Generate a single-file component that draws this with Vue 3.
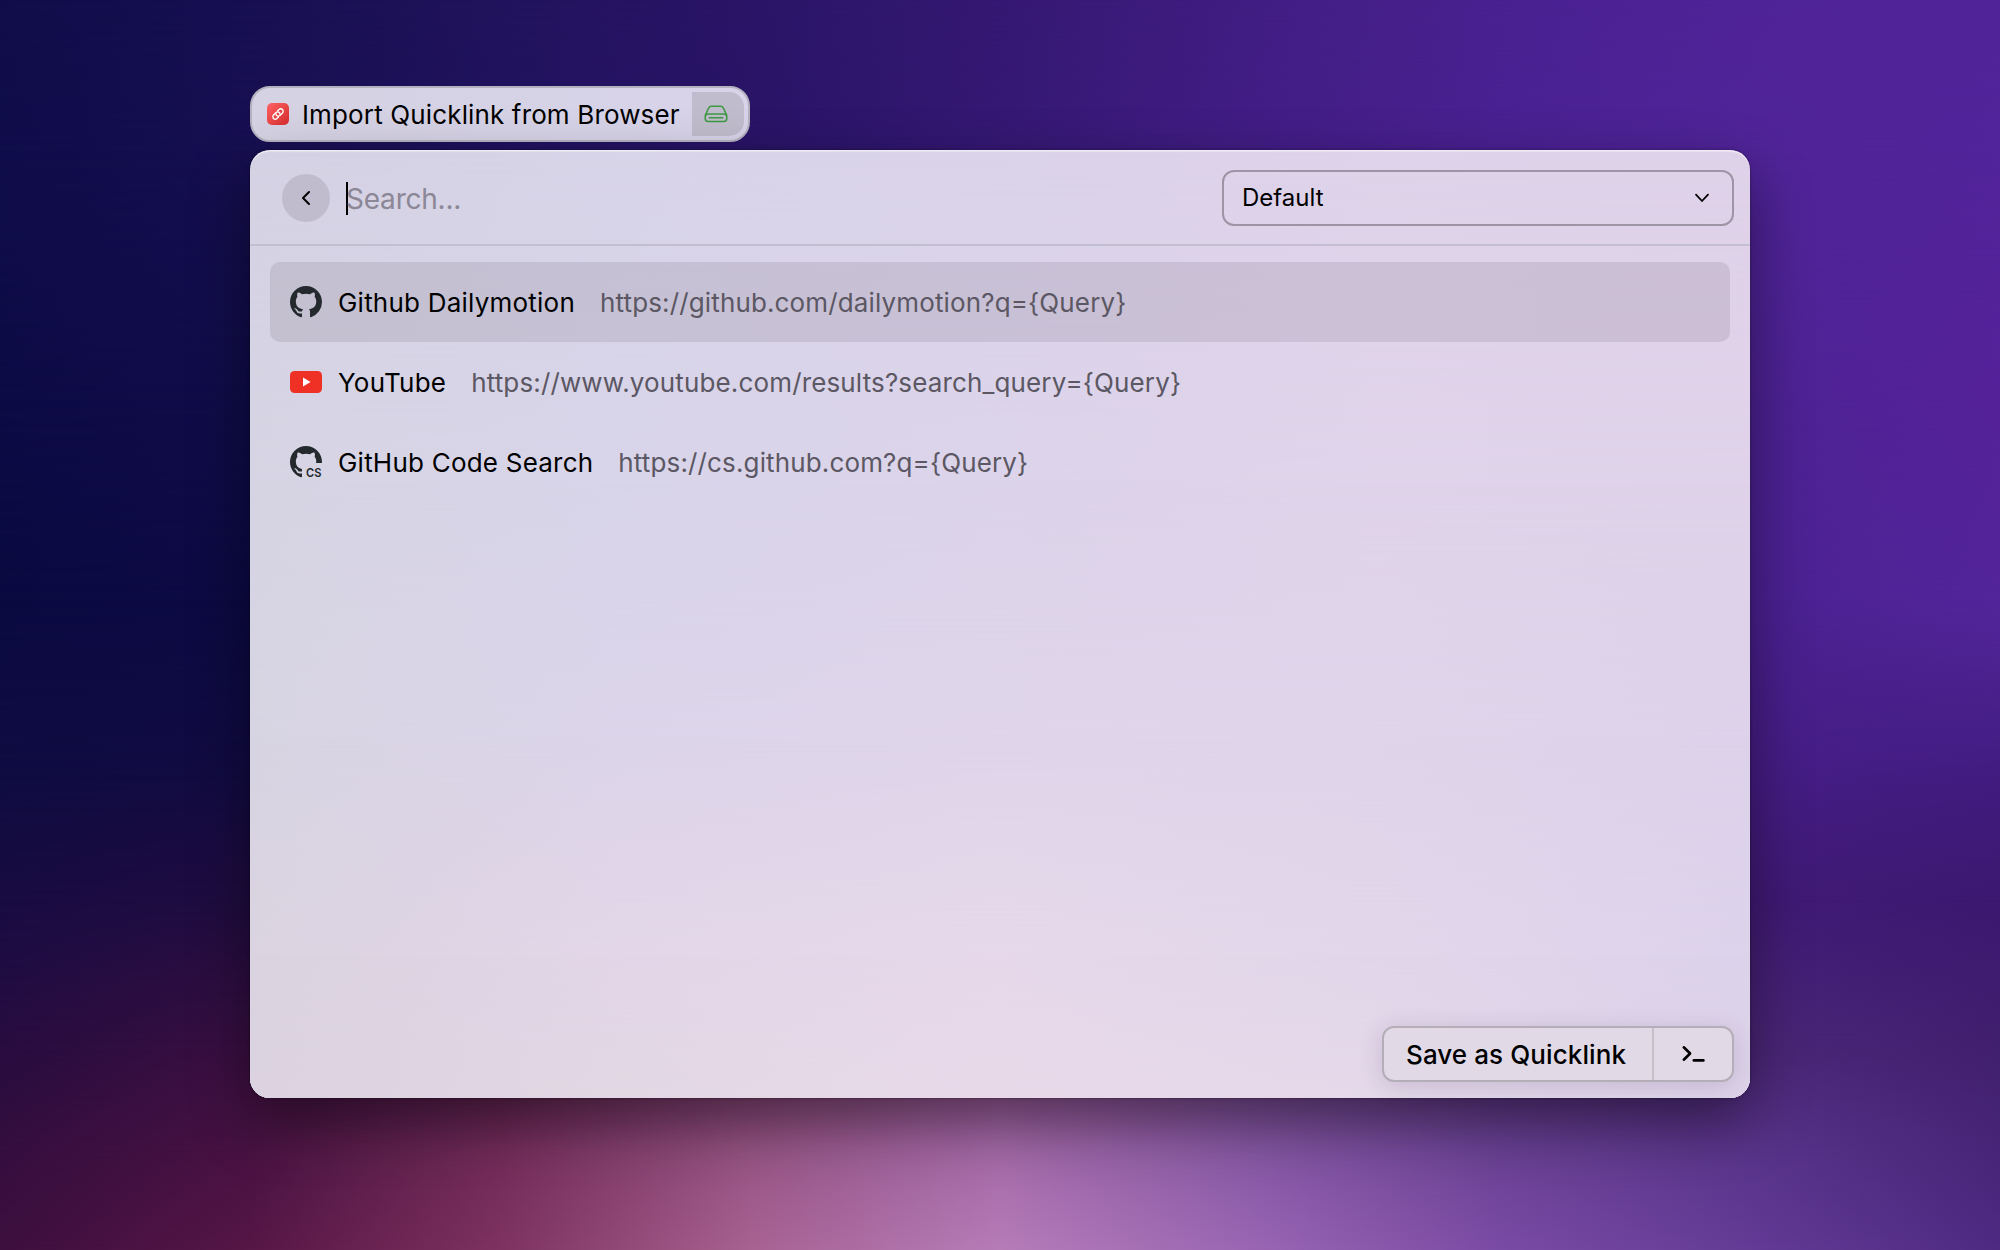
<script setup>
const wallpaper = [
  { y: 0, colors: ['#100e4a', '#170f51', '#21135d', '#2a1567', '#351873', '#401e82', '#4a2191', '#4f2397', '#522499'] },
  { y: 12, colors: ['#0f0d4a', '#170f50', '#20125e', '#291466', '#351874', '#411d84', '#4a2192', '#502498', '#52249a'] },
  { y: 32, colors: ['#0c0b45', '#100c49', '#1c1155', '#271463', '#321670', '#3c1a7c', '#471f8c', '#4d2294', '#552299'] },
  { y: 48, colors: ['#0a0a41', '#0d0a44', '#1a0f50', '#25135c', '#2f1569', '#391975', '#431d85', '#4b2192', '#53259a'] },
  { y: 62, colors: ['#0f0c42', '#120b42', '#220f4a', '#301450', '#3c1860', '#3f1a6b', '#3f1a78', '#461d85', '#421c80'] },
  { y: 72, colors: ['#180c42', '#200c40', '#341147', '#4c1d57', '#55276a', '#502572', '#421c73', '#411a76', '#3c186f'] },
  { y: 84, colors: ['#280c40', '#3a0f41', '#561c4d', '#7a3a6e', '#8e4e8d', '#73428c', '#55307d', '#4b2778', '#41206f'] },
  { y: 92, colors: ['#340e3e', '#481242', '#722c58', '#965484', '#a46aa8', '#8658a4', '#6a4194', '#59348a', '#472577'] },
  { y: 100, colors: ['#3d0f3e', '#561646', '#7e3260', '#a76292', '#b57cb8', '#9a66b3', '#7a4ba4', '#633b95', '#4f2a82'] },
]

const glass = [
  { y: 0, colors: ['#d5d2e4', '#d8d4e8', '#dad3e9', '#dfd3ea', '#dfd2e9'] },
  { y: 35, colors: ['#d6d4e3', '#d8d4e9', '#dcd4ea', '#e0d3ea', '#dfd2e9'] },
  { y: 62, colors: ['#d7d4e2', '#dcd5ea', '#dfd5ea', '#e0d4ea', '#ddd2ea'] },
  { y: 85, colors: ['#dad3e0', '#e3d6e8', '#e6d8ea', '#e2d6ea', '#dcd3eb'] },
  { y: 100, colors: ['#dbd2e0', '#e2d7e4', '#e8d9e9', '#e4d8e9', '#dcd2e8'] },
]

function bandStyle(bands, i) {
  const band = bands[i]
  const style = { background: `linear-gradient(to right, ${band.colors.join(', ')})` }
  if (i > 0) {
    style.maskImage = `linear-gradient(to bottom, transparent ${bands[i - 1].y}%, #000 ${band.y}%)`
  }
  return style
}

const links = [
  { icon: 'github', title: 'Github Dailymotion', url: 'https://github.com/dailymotion?q={Query}' },
  { icon: 'youtube', title: 'YouTube', url: 'https://www.youtube.com/results?search_query={Query}' },
  { icon: 'code-search', title: 'GitHub Code Search', url: 'https://cs.github.com?q={Query}' },
]

const mark =
  'M8 0C3.58 0 0 3.58 0 8c0 3.54 2.29 6.53 5.47 7.59.4.07.55-.17.55-.38 0-.19-.01-.82-.01-1.49-2.01.37-2.53-.49-2.69-.94-.09-.23-.48-.94-.82-1.13-.28-.15-.68-.52-.01-.53.63-.01 1.08.58 1.23.82.72 1.21 1.87.87 2.33.66.07-.52.28-.87.51-1.07-1.78-.2-3.64-.89-3.64-3.95 0-.87.31-1.59.82-2.15-.08-.2-.36-1.02.08-2.12 0 0 .67-.21 2.2.82.64-.18 1.32-.27 2-.27s1.36.09 2 .27c1.53-1.04 2.2-.82 2.2-.82.44 1.1.16 1.92.08 2.12.51.56.82 1.27.82 2.15 0 3.07-1.87 3.75-3.65 3.95.29.25.54.73.54 1.48 0 1.07-.01 1.93-.01 2.2 0 .21.15.46.55.38A8.01 8.01 0 0 0 16 8c0-4.42-3.58-8-8-8z'
</script>

<template>
  <main class="desktop">
    <div class="bands">
      <i v-for="(b, i) in wallpaper" :key="i" class="band" :style="bandStyle(wallpaper, i)"></i>
    </div>

    <div class="pill">
      <svg class="app-icon" width="22" height="22" viewBox="0 0 22 22">
        <defs>
          <linearGradient id="red" x1="0" y1="0" x2="1" y2="1">
            <stop offset="0" stop-color="#ff6265" />
            <stop offset="1" stop-color="#d52b2c" />
          </linearGradient>
        </defs>
        <rect width="22" height="22" rx="5" fill="url(#red)" />
        <g transform="translate(11 11) rotate(-45)" fill="none" stroke="#fff" stroke-width="1.35" stroke-linecap="round">
          <path d="M-1.7 2.4H-3.9A2.4 2.4 0 0 1 -3.9 -2.4H-.3A2.4 2.4 0 0 1 1.2 1.7" />
          <path d="M1.7 -2.4H3.9A2.4 2.4 0 0 1 3.9 2.4H.3A2.4 2.4 0 0 1 -1.2 -1.7" />
        </g>
      </svg>
      <span class="pill-title">Import Quicklink from Browser</span>
      <span class="pill-badge">
        <svg width="24" height="18" viewBox="0 0 24 18" fill="none" stroke="#3c9a41" stroke-width="1.5" stroke-linecap="round" stroke-linejoin="round">
          <path d="M1.3 10.2 4.6 3.1Q5.4 1.2 7.4 1.2H16.6Q18.6 1.2 19.4 3.1L22.7 10.2" />
          <rect x="1.2" y="9" width="21.6" height="7.4" rx="3" />
          <path d="M5.2 12.7H18.8" />
        </svg>
      </span>
    </div>

    <section class="window">
      <div class="bands">
        <i v-for="(b, i) in glass" :key="i" class="band" :style="bandStyle(glass, i)"></i>
      </div>

      <header class="header">
        <button class="back" aria-label="Back">
          <svg width="10" height="16" viewBox="0 0 10 16" fill="none" stroke="#000" stroke-width="2" stroke-linecap="round" stroke-linejoin="round">
            <path d="M8 2 2 8l6 6" />
          </svg>
        </button>
        <div class="search"><span class="caret"></span><span class="placeholder">Search...</span></div>
        <div class="select">
          <span>Default</span>
          <svg width="16" height="10" viewBox="0 0 16 10" fill="none" stroke="#000" stroke-width="1.8" stroke-linecap="round" stroke-linejoin="round">
            <path d="M2 1.7 8 8l6-6.3" />
          </svg>
        </div>
      </header>

      <ul class="list">
        <li v-for="(l, i) in links" :key="l.title" class="row" :class="{ selected: i === 0 }">
          <svg v-if="l.icon === 'github'" width="32" height="32" viewBox="0 0 16 16"><path :d="mark" fill="#24292e" /></svg>
          <svg v-else-if="l.icon === 'youtube'" width="32" height="32" viewBox="0 0 32 32">
            <rect y="5" width="32" height="22" rx="4.5" fill="#ee3124" />
            <path d="M13 11.6v8.8l7.6-4.4z" fill="#fff" />
          </svg>
          <svg v-else class="code-search" width="32" height="32" viewBox="0 0 32 32">
            <defs><clipPath id="corner"><path d="M0 0H32V17H19L12 20V32H0z" /></clipPath></defs>
            <g clip-path="url(#corner)"><path :d="mark" fill="#24292e" transform="scale(2)" /></g>
            <text class="cs" x="16" y="30.6" textLength="15.4" lengthAdjust="spacingAndGlyphs">CS</text>
          </svg>
          <span class="title">{{ l.title }}</span>
          <span class="url">{{ l.url }}</span>
        </li>
      </ul>

      <footer class="footer">
        <div class="actions">
          <span class="save">Save as Quicklink</span>
          <span class="more">
            <svg width="24" height="18" viewBox="0 0 24 18" fill="none" stroke="#000" stroke-width="2.6" stroke-linecap="round" stroke-linejoin="round">
              <path d="M2.8 2.3 9.1 8.5 2.8 14.7" />
              <path d="M12.8 15.4H22.4" />
            </svg>
          </span>
        </div>
      </footer>
    </section>
  </main>
</template>

<style>
body {
  overflow: hidden;
}
</style>

<style scoped>
.desktop {
  position: relative;
  box-sizing: border-box;
  width: 2000px;
  height: 1250px;
  padding: 86px 250px 0;
  overflow: hidden;
  font-family: Inter, sans-serif;
  font-size: 26px;
  color: #000;
}
.bands {
  position: absolute;
  inset: 0;
  border-radius: inherit;
  overflow: hidden;
}
.band {
  position: absolute;
  inset: 0;
}
.pill {
  position: relative;
  box-sizing: border-box;
  display: flex;
  align-items: center;
  width: 500px;
  height: 56px;
  padding: 0 4px 0 15px;
  border: 2px solid #b5b2c0;
  border-radius: 20px;
  background: linear-gradient(to right, #d5d2e3, #d8d3e9);
}
.pill-title {
  flex: 1;
  margin-left: 13px;
  letter-spacing: 0.14px;
  white-space: nowrap;
}
.pill-badge {
  display: flex;
  align-items: center;
  justify-content: center;
  width: 52px;
  height: 44px;
  padding-right: 4px;
  box-sizing: border-box;
  border-radius: 0 15px 15px 0;
  background: #c0bccd;
}
.window {
  position: relative;
  display: flex;
  flex-direction: column;
  height: 948px;
  margin-top: 8px;
  border-radius: 20px;
  box-shadow: 0 24px 60px rgba(0, 0, 0, 0.45), 0 0 3px rgba(0, 0, 0, 0.4);
}
.window::after {
  content: '';
  position: absolute;
  inset: 0;
  border-radius: 20px;
  box-shadow: inset 0 2px 1px -0.5px rgba(255, 255, 255, 0.6);
  pointer-events: none;
}
.header {
  position: relative;
  box-sizing: border-box;
  display: flex;
  align-items: center;
  height: 96px;
  padding: 2px 16px 0 32px;
  border-bottom: 2px solid #c4bed1;
}
.back {
  display: flex;
  align-items: center;
  justify-content: center;
  width: 48px;
  height: 48px;
  padding: 0;
  border: 0;
  border-radius: 50%;
  background: #c0bccd;
}
.search {
  flex: 1;
  display: flex;
  align-items: center;
  margin-left: 16px;
  font-size: 28px;
  letter-spacing: -0.22px;
}
.caret {
  width: 2px;
  height: 33px;
  background: #000;
}
.placeholder {
  margin-left: -2px;
  color: #8b8796;
  transform: translateY(1px);
}
.select {
  box-sizing: border-box;
  display: flex;
  align-items: center;
  justify-content: space-between;
  width: 512px;
  height: 56px;
  padding: 0 22px 0 18px;
  border: 2px solid #9d94a6;
  border-radius: 12px;
  font-size: 24px;
}
.select span {
  transform: translateY(-1px);
}
.list {
  position: relative;
  flex: 1;
  margin: 0;
  padding: 16px 20px 0;
  list-style: none;
}
.row {
  display: flex;
  align-items: center;
  height: 80px;
  padding: 0 20px;
  border-radius: 10px;
  white-space: nowrap;
}
.selected {
  background: rgba(50, 35, 50, 0.105);
}
.title {
  margin-left: 16px;
  letter-spacing: 0.22px;
}
.url {
  margin-left: 25px;
  color: #5b5763;
  letter-spacing: 0.14px;
}
.code-search {
  overflow: visible;
}
.cs {
  font: 600 12px Inter, sans-serif;
  fill: #24292e;
}
.footer {
  position: relative;
  display: flex;
  justify-content: flex-end;
  padding: 0 16px 16px;
}
.actions {
  box-sizing: border-box;
  display: flex;
  width: 352px;
  height: 56px;
  border: 2px solid #b4aeb8;
  border-radius: 12px;
  background: #e1dae6;
  box-shadow: 0 4px 24px rgba(60, 40, 90, 0.16);
}
.save,
.more {
  display: flex;
  align-items: center;
}
.save {
  flex: 1;
  padding-left: 22px;
  font-weight: 500;
  letter-spacing: 0.09px;
  white-space: nowrap;
}
.more {
  box-sizing: border-box;
  justify-content: center;
  width: 80px;
  border-left: 2px solid #c6c0cb;
}
</style>
